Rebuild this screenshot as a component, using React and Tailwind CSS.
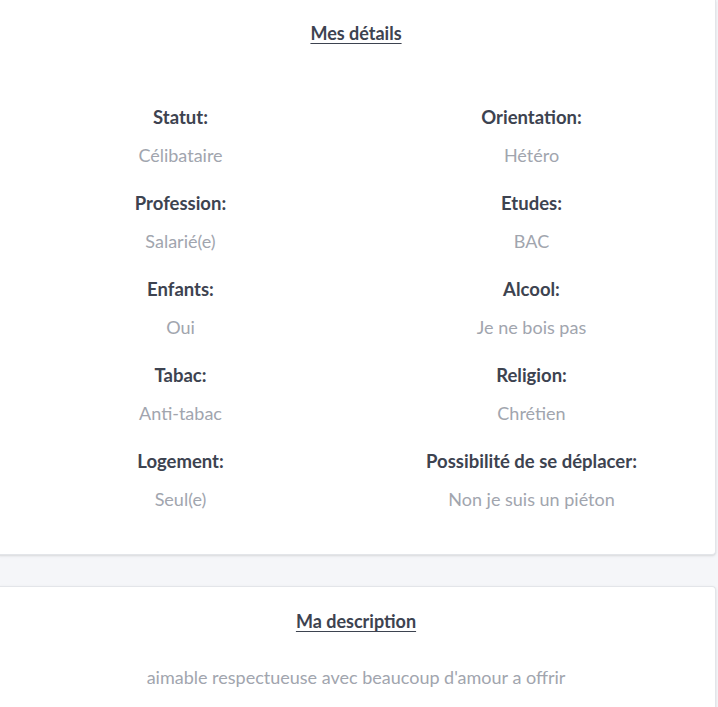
const details = [
  ["Statut:", "Célibataire", "Orientation:", "Hétéro"],
  ["Profession:", "Salarié(e)", "Etudes:", "BAC"],
  ["Enfants:", "Oui", "Alcool:", "Je ne bois pas"],
  ["Tabac:", "Anti-tabac", "Religion:", "Chrétien"],
  ["Logement:", "Seul(e)", "Possibilité de se déplacer:", "Non je suis un piéton"],
];

function Item({ label, value }) {
  return (
    <div className="flex flex-col items-center">
      <div className="text-[18.5px] leading-6 font-bold text-[#3d4350]">{label}</div>
      <div className="mt-[14px] text-[18px] leading-6 text-[#a1a5ae]">{value}</div>
    </div>
  );
}

export default function App() {
  return (
    <div className="min-h-screen overflow-hidden bg-[#f5f6f9] font-['Lato',sans-serif]">
      <div className="-ml-1 w-[720px]">
        <div className="rounded-b-[4px] border border-t-0 border-[#e3e5e9] bg-white px-2 pt-[21px] pb-[43px] shadow-sm">
          <h2 className="text-center text-[18px] leading-6 font-bold text-[#3d4350] underline underline-offset-[3px]">
            Mes détails
          </h2>
          <div className="mt-[60px] grid grid-cols-2 gap-y-6">
            {details.map(([l1, v1, l2, v2]) => (
              <div key={l1} className="contents">
                <Item label={l1} value={v1} />
                <Item label={l2} value={v2} />
              </div>
            ))}
          </div>
        </div>

        <div className="mt-[31px] rounded-t-[4px] border border-b-0 border-[#e3e5e9] bg-white px-2 pt-[22px] pb-10 shadow-sm">
          <h2 className="text-center text-[18px] leading-6 font-bold text-[#3d4350] underline underline-offset-[3px]">
            Ma description
          </h2>
          <p className="mt-8 text-center text-[18px] leading-6 text-[#a1a5ae]">
            aimable respectueuse avec beaucoup d'amour a offrir
          </p>
        </div>
      </div>
    </div>
  );
}
